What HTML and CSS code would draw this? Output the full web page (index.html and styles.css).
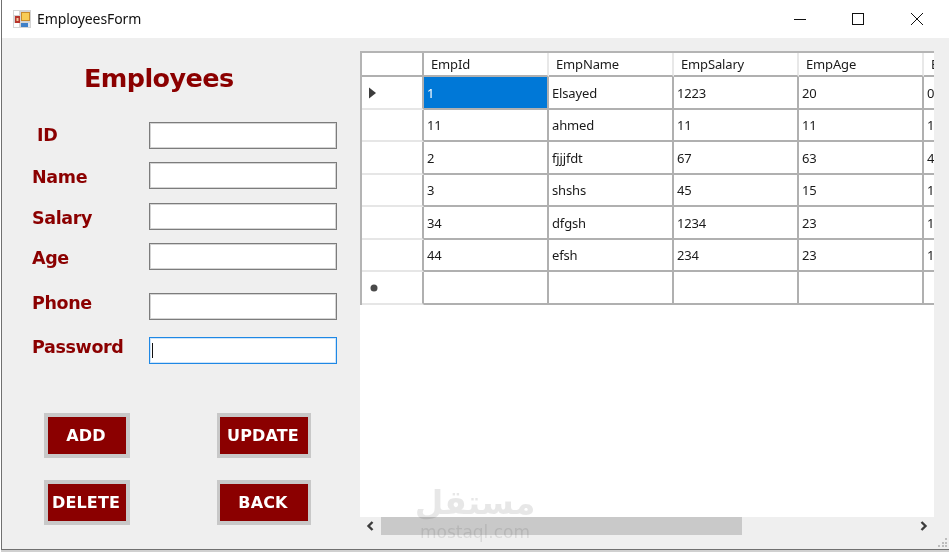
FILE: index.html
```html
<!DOCTYPE html>
<html lang="en">
<head>
<meta charset="utf-8">
<title>EmployeesForm</title>
<link rel="stylesheet" href="styles.css">
</head>
<body>
<div class="window">
  <header class="titlebar">
    <svg class="app-icon" width="18" height="18" viewBox="0 0 18 18">
      <rect width="18" height="18" fill="#d4d4d4"/>
      <rect x="1" y="1" width="5" height="4" fill="#fff"/>
      <rect x="1" y="13" width="5" height="4" fill="#fff"/>
      <rect x="12" y="13" width="5" height="4" fill="#dfe6f2"/>
      <rect x="2" y="6" width="5" height="7" fill="#b8342b"/>
      <rect x="3.5" y="8" width="2" height="3" fill="#f2c9a0"/>
      <rect x="8" y="2" width="9" height="9" fill="#c98b2a"/>
      <rect x="9" y="3" width="7" height="7" fill="#f8cc55"/>
      <rect x="8" y="13" width="7" height="4" fill="#3f80c8"/>
    </svg>
    <span class="app-title">EmployeesForm</span>
    <div class="controls">
      <span class="ctl"><svg width="14" height="14" viewBox="0 0 14 14"><path d="M1 7.5h12" stroke="#111" stroke-width="1"/></svg></span>
      <span class="ctl"><svg width="14" height="14" viewBox="0 0 14 14"><rect x="1.5" y="1.5" width="11" height="11" fill="none" stroke="#111" stroke-width="1"/></svg></span>
      <span class="ctl"><svg width="14" height="14" viewBox="0 0 14 14"><path d="M1 1l12 12M13 1L1 13" stroke="#111" stroke-width="1"/></svg></span>
    </div>
  </header>
  <main class="client">
    <section class="form-panel">
      <h1 class="heading">Employees</h1>
      <div class="rows">
        <div class="row row-id"><label class="lbl lbl-id">ID</label><div class="field"></div></div>
        <div class="row row-gap13"><label class="lbl">Name</label><div class="field"></div></div>
        <div class="row row-gap14"><label class="lbl">Salary</label><div class="field"></div></div>
        <div class="row row-gap13"><label class="lbl">Age</label><div class="field"></div></div>
        <div class="row row-gap23"><label class="lbl lbl-high">Phone</label><div class="field"></div></div>
        <div class="row row-gap17"><label class="lbl lbl-high">Password</label><div class="field field-focus"><span class="caret"></span></div></div>
      </div>
      <div class="buttons">
        <div class="btn">ADD</div>
        <div class="btn btn-wide">UPDATE</div>
        <div class="btn">DELETE</div>
        <div class="btn btn-wide">BACK</div>
      </div>
    </section>
    <section class="grid-panel">
      <div class="grid-view">
        <div class="dg">
          <div class="c rh hd"></div><div class="c hd">EmpId</div><div class="c hd">EmpName</div><div class="c hd">EmpSalary</div><div class="c hd">EmpAge</div><div class="c hd">EmpPhone</div>
          <div class="c rh"><svg width="9" height="12" viewBox="0 0 9 12"><path d="M1 0.5l7 5.5-7 5.5z" fill="#3c3c3c"/></svg></div><div class="c sel">1</div><div class="c">Elsayed</div><div class="c">1223</div><div class="c">20</div><div class="c">012</div>
          <div class="c rh"></div><div class="c">11</div><div class="c">ahmed</div><div class="c">11</div><div class="c">11</div><div class="c">11</div>
          <div class="c rh"></div><div class="c">2</div><div class="c">fjjjfdt</div><div class="c">67</div><div class="c">63</div><div class="c">45</div>
          <div class="c rh"></div><div class="c">3</div><div class="c">shshs</div><div class="c">45</div><div class="c">15</div><div class="c">12</div>
          <div class="c rh"></div><div class="c">34</div><div class="c">dfgsh</div><div class="c">1234</div><div class="c">23</div><div class="c">12</div>
          <div class="c rh"></div><div class="c">44</div><div class="c">efsh</div><div class="c">234</div><div class="c">23</div><div class="c">13</div>
          <div class="c rh rh-new"><svg width="8" height="8" viewBox="0 0 8 8"><circle cx="4" cy="4" r="3.5" fill="#4a4a4a"/></svg></div><div class="c"></div><div class="c"></div><div class="c"></div><div class="c"></div><div class="c"></div>
        </div>
      </div>
      <div class="scrollbar">
        <svg class="arrow" width="8" height="10" viewBox="0 0 8 10"><path d="M6.5 1L2.5 5l4 4" fill="none" stroke="#3c3c3c" stroke-width="2.4"/></svg>
        <div class="track"><div class="thumb"></div></div>
        <svg class="arrow" width="8" height="10" viewBox="0 0 8 10"><path d="M1.5 1l4 4-4 4" fill="none" stroke="#3c3c3c" stroke-width="2.4"/></svg>
      </div>
    </section>
    <svg class="grip" width="10" height="10" viewBox="0 0 10 10"><path d="M7 0h2v2H7zM4 4h2v2H4zM7 4h2v2H7zM0 7h2v2H0zM4 7h2v2H4zM7 7h2v2H7z" fill="#bdbdbd"/></svg>
  </main>
  <div class="watermark"><span class="wm-ar" lang="ar" dir="rtl">مستقل</span><span class="wm-en">mostaql.com</span></div>
</div>
</body>
</html>
```
FILE: styles.css
```css
* { box-sizing: border-box; }
html, body { margin: 0; height: 100%; overflow: hidden; background: #fff; }
.window {
  position: relative;
  width: 949px;
  height: 550px;
  margin-left: 1px;
  border-left: 1px solid #707070;
  border-bottom: 1px solid #707070;
  display: flex;
  flex-direction: column;
  box-shadow: 0 2px 0 #d0d0d0;
  filter: blur(0.35px);
}
.titlebar {
  height: 38px;
  flex: none;
  background: #fff;
  display: flex;
  align-items: center;
  padding-left: 11px;
}
.app-icon { flex: none; }
.app-title { margin-left: 6px; font: 14px/18px "Noto Sans", sans-serif; color: #111; letter-spacing: -0.1px; }
.controls { margin-left: auto; display: flex; padding-right: 4px; }
.ctl { width: 58.5px; height: 38px; display: flex; align-items: center; justify-content: center; }
.client { flex: 1; min-height: 0; display: flex; background: #efefef; position: relative; }
.form-panel { width: 358px; flex: none; padding-top: 24px; }
.heading {
  margin: 0 0 0 82px;
  font: bold 25.5px/32px "DejaVu Sans", sans-serif;
  letter-spacing: -0.6px;
  color: #8b0000;
}
.rows { margin-top: 28px; padding-left: 30px; display: flex; flex-direction: column; }
.row { display: flex; align-items: center; height: 27px; }
.row-gap13 { margin-top: 13px; }
.row-gap14 { margin-top: 14px; }
.row-gap17 { margin-top: 17px; }
.row-gap23 { margin-top: 23px; }
.lbl {
  width: 117px;
  flex: none;
  margin-top: 2px;
  font: bold 17.5px/22px "DejaVu Sans", sans-serif;
  letter-spacing: -0.35px;
  color: #8b0000;
}
.lbl-id { padding-left: 5px; margin-top: -2px; }
.lbl-high { margin-top: -8px; }
.field {
  width: 188px;
  height: 27px;
  background: #fff;
  border: 1px solid #7c7c7c;
  box-shadow: inset 0 0 0 1px #d4d4d4;
  display: flex;
  align-items: center;
  padding-left: 2px;
}
.field-focus { border-color: #1e88e5; box-shadow: inset 0 0 0 1px #cfe4f8; }
.caret { width: 1px; height: 15px; background: #111; }
.buttons {
  margin: 49px 0 0 42px;
  display: grid;
  grid-template-columns: 86px 94px;
  column-gap: 87px;
  row-gap: 22px;
}
.btn {
  height: 45px;
  background: #8b0000;
  border: 4px solid #c8c8c8;
  color: #fff;
  font: bold 16px/37px "DejaVu Sans", sans-serif;
  letter-spacing: 0.15px;
  padding-right: 2px;
  text-align: center;
}
.btn-wide { border-left-width: 3px; border-right-width: 3px; }
.grid-panel { width: 574px; flex: none; padding-top: 13px; display: flex; flex-direction: column; }
.grid-view { height: 466px; background: #fff; overflow: hidden; }
.dg {
  display: grid;
  grid-template-columns: 62px repeat(5, 125px);
  grid-template-rows: 24px repeat(7, 32.5px);
  width: 687px;
  border-top: 2px solid #b4b4b4;
  border-left: 2px solid #b4b4b4;
}
.c {
  font: 13px/1 "Noto Sans", sans-serif;
  letter-spacing: -0.15px;
  color: #1a1a1a;
  padding: 2px 0 0 3px;
  display: flex;
  align-items: center;
  border-right: 2px solid #b0b0b0;
  border-bottom: 2px solid #b0b0b0;
  background: #fff;
}
.hd { padding: 1px 0 0 7px; border-right-color: #e8e8e8; }
.rh { border-bottom-color: #e6e6e6; padding-left: 6px; border-right-color: #b0b0b0; }
.rh.hd { border-bottom-color: #b0b0b0; }
.rh-new { padding-left: 8px; }
.sel { background: #0078d7; color: #fff; }
.scrollbar { height: 18px; flex: none; display: flex; align-items: center; padding: 0 6px; }
.track { flex: 1; height: 18px; padding-left: 7px; }
.thumb { width: 361px; height: 18px; background: #c9c9c9; }
.arrow { flex: none; }
.grip { position: absolute; right: 2px; bottom: 1px; }
.watermark {
  position: absolute;
  left: 413px;
  top: 482px;
  width: 120px;
  display: flex;
  flex-direction: column;
  align-items: center;
  color: #000;
  opacity: 0.09;
  font-family: "DejaVu Sans", sans-serif;
  font-weight: bold;
  pointer-events: none;
}
.wm-ar { font-size: 33px; line-height: 42px; }
.wm-en { font-size: 17px; line-height: 16px; font-weight: normal; }
```
